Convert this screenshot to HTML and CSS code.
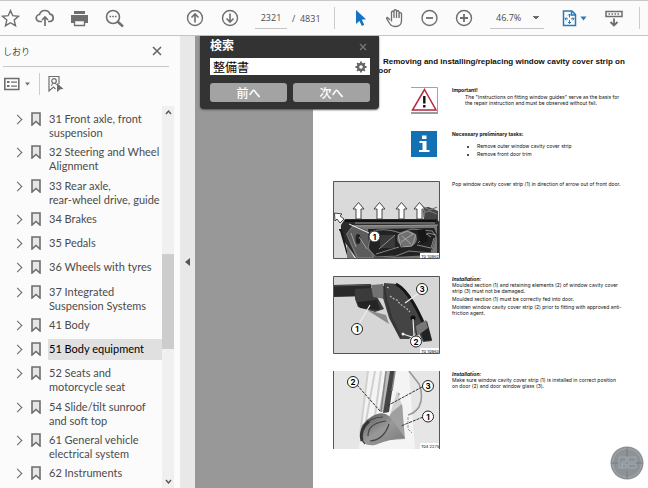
FILE: index.html
```
<!DOCTYPE html>
<html lang="en">

<head>
    <meta charset="UTF-8">
    <meta name="viewport" content="width=device-width, initial-scale=1.0">
    <title>Workshop Manual</title>
    <link rel="stylesheet" href="styles.css">
</head>

<body>

    <header class="toolbar">
        <button class="tool" type="button" aria-label="Favourite">
            <svg viewBox="0 0 20 20"><path d="M10.5 2.5l2.3 5.2 5.7.6-4.300 3.800 1.300 5.600-5-3-5 3 1.300-5.600-4.300-3.800 5.700-.6z" fill="none" stroke="#6e6e6e" stroke-width="1.400"/></svg>
        </button>
        <button class="tool" type="button" aria-label="Upload">
            <svg viewBox="0 0 20 20"><path d="M7 13.500H5a3.500 3.500 0 0 1-.5-7 5.500 5.500 0 0 1 10.500-.3 3.700 3.700 0 0 1 .2 7.300H13M10 18V9M7 12l3-3 3 3" fill="none" stroke="#6e6e6e" stroke-width="1.700"/></svg>
        </button>
        <button class="tool" type="button" aria-label="Print">
            <svg viewBox="0 0 20 20"><path d="M4 3h11v3H4zM1 7h17v8h-3v-3H4v3H1z" fill="#6e6e6e"/><path d="M4.500 12.500h10v5h-10z" fill="#fbfbfb" stroke="#6e6e6e" stroke-width="1.300"/></svg>
        </button>
        <button class="tool" type="button" aria-label="Find">
            <svg viewBox="0 0 20 20"><circle cx="8" cy="9" r="6.500" fill="none" stroke="#6e6e6e" stroke-width="1.600"/><path d="M12.500 13.500l5.500 5" stroke="#6e6e6e" stroke-width="2.400"/><path d="M4.500 8.500h1.600M7.200 8.500h1.600M9.900 8.500h1.600" stroke="#6e6e6e" stroke-width="1.500"/></svg>
        </button>

        <button class="tool page-nav" type="button" aria-label="Previous page">
            <svg viewBox="0 0 20 20"><circle cx="10" cy="10" r="7.500" fill="none" stroke="#6e6e6e" stroke-width="1.400"/><path d="M10 14.500V6M6.500 9.500L10 6l3.500 3.500" fill="none" stroke="#6e6e6e" stroke-width="1.600"/></svg>
        </button>
        <button class="tool" type="button" aria-label="Next page">
            <svg viewBox="0 0 20 20"><circle cx="10" cy="10" r="7.500" fill="none" stroke="#6e6e6e" stroke-width="1.400"/><path d="M10 5.500V14M6.500 10.500L10 14l3.500-3.500" fill="none" stroke="#6e6e6e" stroke-width="1.600"/></svg>
        </button>
        <div class="page-count">
            <input class="page-input" type="text" value="2321" aria-label="Page number">
            <span>/&nbsp; 4831</span>
        </div>
        <span class="divider"></span>

        <button class="tool" type="button" aria-label="Select tool">
            <svg viewBox="0 0 20 20"><path d="M6 2l10 9.300-4.200.5 2.500 5-2.400 1.200-2.500-5L6 16z" fill="#1473c4"/></svg>
        </button>
        <button class="tool" type="button" aria-label="Hand tool">
            <svg viewBox="0 0 20 20"><path d="M5 12L2.500 9.500Q1.300 9.800 1.800 11L5 16q1.500 2.500 5.500 2.500 6 0 6-6V5.500q-1.200-1.600-2.400 0V10M14 10V3.500q-1.200-1.500-2.500 0V10M11.500 10V2.500q-1.300-1.500-2.500 0V10M9 10V4q-1.300-1.500-2.500 0v9.500" fill="none" stroke="#6e6e6e" stroke-width="1.300"/></svg>
        </button>
        <button class="tool" type="button" aria-label="Zoom out">
            <svg viewBox="0 0 20 20"><circle cx="9.500" cy="10" r="7.500" fill="none" stroke="#6e6e6e" stroke-width="1.400"/><path d="M6 10h7" stroke="#6e6e6e" stroke-width="1.800"/></svg>
        </button>
        <button class="tool" type="button" aria-label="Zoom in">
            <svg viewBox="0 0 20 20"><circle cx="9" cy="10" r="7.500" fill="none" stroke="#6e6e6e" stroke-width="1.400"/><path d="M5 10h8M9 6v8" stroke="#6e6e6e" stroke-width="1.800"/></svg>
        </button>
        <select class="zoom-select" aria-label="Zoom level">
            <option>46.7%</option>
        </select>
        <button class="tool tool-wide" type="button" aria-label="Fit page">
            <svg viewBox="0 0 30 20"><path d="M4.500 3h8.500l3.500 3.500v11h-12zM12.500 3v4h4" fill="none" stroke="#2a78b5" stroke-width="1.500"/><path d="M10.500 6v3.500M9 7.500L10.500 6 12 7.500M10.500 12v3.500M9 14l1.500 1.500L12 14M6 10.800h3M7.300 9.300L6 10.800l1.300 1.500M12 10.800h3M13.700 9.300l1.300 1.500-1.300 1.500" fill="none" stroke="#2a78b5"/><path d="M21.500 8.500h6l-3 4z" fill="#2a78b5"/></svg>
        </button>
        <button class="tool" type="button" aria-label="Read mode">
            <svg viewBox="0 0 20 20"><path d="M2 3.500h16v5H2z" fill="none" stroke="#6e6e6e" stroke-width="1.500"/><path d="M4.500 6h11" stroke="#6e6e6e" stroke-width="1.500" stroke-dasharray="1.500 1.500"/><path d="M10 10.500v7M6.500 14l3.500 3.500 3.500-3.500" fill="none" stroke="#6e6e6e" stroke-width="1.800"/></svg>
        </button>
        <span class="divider"></span>
    </header>

    <main class="workspace">
        <aside class="sidebar">
            <div class="sidebar-header">
                <h2>しおり</h2>
                <button class="close-panel" type="button" aria-label="Close">
                    <svg viewBox="0 0 10 10"><path d="M1 1l8 8M9 1L1 9" stroke="#666" stroke-width="1.600"/></svg>
                </button>
            </div>
            <div class="sidebar-tools">
                <button type="button" aria-label="Options">
                    <svg width="28" height="16" viewBox="0 0 28 16"><path d="M1.800 2.500h14v11h-14z" fill="none" stroke="#6e6e6e" stroke-width="1.600"/><path d="M4 5h2.500v2H4zM4 9h2.500v2H4zM8 5.500h6v1.300H8zM8 9.500h6v1.300H8zM22 6.500h5l-2.500 3z" fill="#6e6e6e"/></svg>
                </button>
                <span class="divider"></span>
                <button type="button" aria-label="Find current bookmark">
                    <svg width="16" height="18" viewBox="0 0 16 18"><path d="M11 9V1.500H1V16l4.500-4 2 2" fill="none" stroke="#6e6e6e" stroke-width="1.200"/><circle cx="6" cy="6" r="2.300" fill="none" stroke="#6e6e6e" stroke-width="1.200"/><path d="M4.500 8L3.500 11M7.500 8l1 2" stroke="#6e6e6e"/><path d="M9 8l6.500 6-3.200.3L9 17z" fill="#6e6e6e"/></svg>
                </button>
            </div>

            <svg class="sprite">
                <symbol id="bookmark" viewBox="0 0 10 14">
                    <path d="M1 1h8v12L5 9.500 1 13z" fill="#e6e6e6" stroke="#6e6e6e" stroke-width="1.600"/>
                </symbol>
            </svg>

            <div class="bookmark-area">
                <ul class="bookmarks">
                    <li><svg class="mark"><use href="#bookmark"/></svg><a href="#">31 Front axle, front<br>suspension</a></li>
                    <li><svg class="mark"><use href="#bookmark"/></svg><a href="#">32 Steering and Wheel<br>Alignment</a></li>
                    <li><svg class="mark"><use href="#bookmark"/></svg><a href="#">33 Rear axle,<br>rear-wheel drive, guide</a></li>
                    <li><svg class="mark"><use href="#bookmark"/></svg><a href="#">34 Brakes</a></li>
                    <li><svg class="mark"><use href="#bookmark"/></svg><a href="#">35 Pedals</a></li>
                    <li><svg class="mark"><use href="#bookmark"/></svg><a href="#">36 Wheels with tyres</a></li>
                    <li><svg class="mark"><use href="#bookmark"/></svg><a href="#">37 Integrated<br>Suspension Systems</a></li>
                    <li><svg class="mark"><use href="#bookmark"/></svg><a href="#">41 Body</a></li>
                    <li><svg class="mark"><use href="#bookmark"/></svg><a class="selected" href="#">51 Body equipment</a></li>
                    <li><svg class="mark"><use href="#bookmark"/></svg><a href="#">52 Seats and<br>motorcycle seat</a></li>
                    <li><svg class="mark"><use href="#bookmark"/></svg><a href="#">54 Slide/tilt sunroof<br>and soft top</a></li>
                    <li><svg class="mark"><use href="#bookmark"/></svg><a href="#">61 General vehicle<br>electrical system</a></li>
                    <li><svg class="mark"><use href="#bookmark"/></svg><a href="#">62 Instruments</a></li>
                </ul>
                <div class="scrollbar">
                    <svg viewBox="0 0 12 12"><path d="M4 8l2.500-3L9 8" fill="none" stroke="#555" stroke-width="1.400"/></svg>
                    <div class="track">
                        <div class="thumb"></div>
                    </div>
                    <svg viewBox="0 0 12 12"><path d="M4 4l2.500 3L9 4" fill="none" stroke="#555" stroke-width="1.400"/></svg>
                </div>
            </div>
        </aside>

        <button class="splitter" type="button" aria-label="Collapse panel">
            <svg width="5" height="8" viewBox="0 0 5 8"><path d="M5 0v8L0 4z" fill="#555"/></svg>
        </button>

        <section class="viewer">
            <article class="page">
                <h1>Removing and installing/replacing window cavity cover strip on<br>front door</h1>

                <div class="row">
                    <svg class="notice" viewBox="0 0 27 27"><path d="M0 .5h26.500V25" fill="none" stroke="#9aa8a4"/><path d="M0 26h27" stroke="#8f9f9b" stroke-width="2"/><path d="M13.500 2.500L25 23H1.500z" fill="#fff" stroke="#b5273f" stroke-width="1.500"/><path d="M13.300 9v7.500M13.300 18V20.500" stroke="#111" stroke-width="2.400"/></svg>
                    <div class="text">
                        <h3>Important!</h3>
                        <p class="indent">The "Instructions on fitting window guides" serve as the basis for<br>the repair instruction and must be observed without fail.</p>
                    </div>
                </div>

                <div class="row">
                    <svg class="notice" viewBox="0 0 27 27"><path d="M0 0h26v26H0z" fill="#1470b5"/><path d="M11 4.500h4.500V8H11zM8.500 10h7v9h3v2H8v-2h3.500v-7h-3z" fill="#fff"/></svg>
                    <div class="text">
                        <h3>Necessary preliminary tasks:</h3>
                        <ul>
                            <li>Remove outer window cavity cover strip</li>
                            <li>Remove front door trim</li>
                        </ul>
                    </div>
                </div>

                <div class="row first-step">
                    <svg class="figure" viewBox="0 0 107 78">
                        <path d="M0 0h107v78H0z" fill="#dadada"/>
                        <path d="M90 30q3-6 8-3l7 3v18H92z" fill="#444"/>
                        <path d="M88 25l9 4 7-3M90 32l6-2 8 3M92 27l-1 9" fill="none" stroke="#777" stroke-width="1.200"/>
                        <path d="M12 38h92l3 4v36H24L8 56V44z" fill="#2b2b2b"/>
                        <path d="M13 53l7-9h84v34H24z" fill="#777"/>
                        <path d="M14 53l7-8 13 4 5 27H25z" fill="#5c5c5c"/>
                        <path d="M35 48l66-1 3 7-6 20-56 3-6-10z" fill="#222"/>
                        <path d="M12 40h91" stroke="#111" stroke-width="2"/>
                        <path d="M22 42h80M21 45l84-1" fill="none" stroke="#999"/>
                        <path d="M38 51q12-5 29 1l12-4 20 2 4 5-5 17-22-2-13 5-20 1-8-8z" fill="none" stroke="#7c7c7c" stroke-width="1.100"/>
                        <path d="M47 54h15v13H47z" fill="#3a3a3a"/>
                        <ellipse cx="74" cy="58" rx="10" ry="8" fill="#707070"/>
                        <path d="M65 54l9-4 9 4-4 11-11 1zM68 61l12-8M69 55l9 8M85 62l10-10 8 2M84 64l14 3 3-10M43 73l23-7M46 68l16-14M88 49l10 7" fill="none" stroke="#c9c9c9" stroke-width=".6"/>
                        <path d="M84 49l8-1 3 12-7 3z" fill="#171717"/>
                        <ellipse cx="25" cy="58" rx="2.500" ry="5" fill="#222"/>
                        <path d="M26 56l8 12M18 52l5 14" stroke="#bbb" stroke-width=".7"/>
                        <path d="M16 43l20 9" stroke="#eee"/>
                        <path d="M9 48l7 30H12L6 48z" fill="#181818"/>
                        <path d="M0 50h7l8 28H0z" fill="#dadada"/>
                        <path d="M14 64l8 14h-8z" fill="#777"/>
                        <g fill="#fff" stroke="#333" stroke-width=".9">
                            <path id="arrow" d="M25.500 21.500l5.500 6.500h-3v10h-5V28h-3z"/>
                            <use href="#arrow" x="21"/>
                            <use href="#arrow" x="43"/>
                            <use href="#arrow" x="61"/>
                            <path d="M1.500 32l7.500 1-2 2 4 3-4 4-3-4-2 2z"/>
                        </g>
                        <circle cx="41.500" cy="55.500" r="5.500" fill="#fff" stroke="#222"/>
                        <text x="41.500" y="58.500" class="callout">1</text>
                        <path d="M87 72h20v6H87z" fill="#fff"/>
                        <text x="97" y="77" class="code">T0 10962</text>
                        <path d="M.5.5h106v77H.5z" fill="none" stroke="#555"/>
                    </svg>
                    <div class="text">
                        <p>Pop window cavity cover strip (1) in direction of arrow out of front door.</p>
                    </div>
                </div>

                <div class="row">
                    <svg class="figure" viewBox="0 0 107 78">
                        <path d="M0 0h107v78H0z" fill="#d6d6d6"/>
                        <path d="M0 9l38-1v12L0 21z" fill="#292929"/>
                        <path d="M0 10l38-1" stroke="#555"/>
                        <path d="M22 13l17-1 12 21-9 3-17-5-3-8z" fill="#3b3b3b"/>
                        <path d="M24 26l20-2 3 10-20-2z" fill="#242424"/>
                        <path d="M34 34l19 5 3 9z" fill="#8a8a8a"/>
                        <path d="M38 9l12-1 2 15-12-2z" fill="#727272"/>
                        <path d="M51 7l14 1q16 10 34 57l-9 1-5-11-9 8h-9L56 42 50 22z" fill="#444"/>
                        <path d="M63 8q17 9 34 56" fill="none" stroke="#171717" stroke-width="3"/>
                        <path d="M51 10l2 14 6 20 9 17" fill="none" stroke="#333" stroke-width="2"/>
                        <path d="M54 11l3 2M57 20l4 3 3 1 3 4 6 4 4 4" fill="none" stroke="#bbb" stroke-width="1.200" stroke-dasharray="2 1.500"/>
                        <path d="M84 52l10-7 5 19-8 1-3-8-6 3z" fill="#222"/>
                        <path d="M83 50l10-6 2 8-11 8z" fill="#777"/>
                        <circle cx="80" cy="42" r="2.500" fill="#111"/>
                        <circle cx="70" cy="58" r="1.500" fill="#eee"/>
                        <path d="M26 48l11-19M86 17L72 27M81 59l-1-16M79 61l-9-3" stroke="#eee" stroke-width="1.200"/>
                        <g fill="#fff" stroke="#222">
                            <circle cx="24" cy="53" r="5.500"/>
                            <circle cx="89" cy="13" r="5.500"/>
                            <circle cx="83" cy="65.500" r="5.500"/>
                        </g>
                        <text x="24" y="56" class="callout">1</text>
                        <text x="89" y="16" class="callout">3</text>
                        <text x="83" y="68.500" class="callout">2</text>
                        <path d="M87 72h20v6H87z" fill="#fff"/>
                        <text x="97" y="77" class="code">T0 10963</text>
                        <path d="M.5.5h106v77H.5z" fill="none" stroke="#555"/>
                    </svg>
                    <div class="text">
                        <h3><i>Installation:</i></h3>
                        <p>Moulded section (1) and retaining elements (2) of window cavity cover<br>strip (3) must not be damaged.</p>
                        <p>Moulded section (1) must be correctly fed into door.</p>
                        <p>Moisten window cavity cover strip (2) prior to fitting with approved anti-<br>friction agent.</p>
                    </div>
                </div>

                <div class="row">
                    <svg class="figure" viewBox="0 0 107 78">
                        <defs>
                            <linearGradient id="glass" x2="1" y2="1"><stop offset="0" stop-color="#555"/><stop offset=".5" stop-color="#999"/><stop offset="1" stop-color="#777"/></linearGradient>
                        </defs>
                        <path d="M0 0h107v78H0z" fill="#e6e6e6"/>
                        <path d="M34 0h42l6 78H26l4-40z" fill="#f4f4f4"/>
                        <path d="M35 0l-8 64M42 0l-9 50M48 0l-6 45" stroke="#d0d0d0" stroke-width="2"/>
                        <path d="M53 0h9l-8 42-8-2z" fill="#bbb"/>
                        <path d="M57 0h5l-6 41-6 1z" fill="#444"/>
                        <path d="M53 0l-5 41M62 0l-3 20" stroke="#888" stroke-width="1.500"/>
                        <path d="M76 0l10 13q5 12 0 23-4 6-11 8M66 22l-4 18" fill="none" stroke="#999" stroke-width="1.600"/>
                        <path d="M64 20l6 17-2 22-12-12z" fill="#d2d2d2"/>
                        <path d="M59 41l10-8 3 35-30 2z" fill="#a0a0a0"/>
                        <path d="M27 64q0-12 11-18 11-7 18-1 8 10 16 22-16 1-30 7-13 2-15-10z" fill="url(#glass)"/>
                        <path d="M32 73q-7-6-2-17 7-10 20-10M37 70q14-1 19-17M35 65q0-13 18-15" fill="none" stroke="#444" stroke-width="1.200"/>
                        <path d="M29 70q-3-11 7-20" fill="none" stroke="#333" stroke-width="3"/>
                        <path d="M24 14l23 26M89 16L54 35M90 46l-22 9" stroke="#333" stroke-dasharray="3 1"/>
                        <path d="M75 46v12l4 4" fill="none" stroke="#999" stroke-dasharray="3 1"/>
                        <g fill="#fff" stroke="#222">
                            <circle cx="20" cy="11" r="5.500"/>
                            <circle cx="95" cy="15" r="5.500"/>
                            <circle cx="95" cy="45.500" r="5.500"/>
                        </g>
                        <text x="20" y="14" class="callout">2</text>
                        <text x="95" y="18" class="callout">3</text>
                        <text x="95" y="48.500" class="callout">1</text>
                        <path d="M87 72h20v6H87z" fill="#fff"/>
                        <text x="97" y="77" class="code">T04 2275</text>
                        <path d="M.5 0v78M106.500 0v78" stroke="#555"/>
                    </svg>
                    <div class="text">
                        <h3><i>Installation:</i></h3>
                        <p>Make sure window cavity cover strip (1) is installed in correct position<br>on door (2) and door window glass (3).</p>
                    </div>
                </div>
            </article>

            <form class="search-box">
                <div class="search-title">
                    <label for="search">検索</label>
                    <button type="button" aria-label="Close search">
                        <svg width="8" height="8" viewBox="0 0 8 8"><path d="M1 1l6 6M7 1L1 7" stroke="#777" stroke-width="1.300"/></svg>
                    </button>
                </div>
                <div class="search-field">
                    <input id="search" type="text" value="整備書">
                    <svg width="12" height="12" viewBox="0 0 12 12"><circle cx="6" cy="6" r="3" fill="none" stroke="#666" stroke-width="2.400"/><path d="M6 .5v2M6 9.500v2M.5 6h2M9.500 6h2M2.100 2.100l1.400 1.400M8.500 8.500l1.400 1.400M2.100 9.900l1.400-1.400M8.500 3.500l1.400-1.400" stroke="#666" stroke-width="1.800"/></svg>
                </div>
                <div class="search-buttons">
                    <button type="button">前へ</button>
                    <button type="button">次へ</button>
                </div>
            </form>

            <button class="float-button" type="button" aria-label="Capture">
                <svg viewBox="0 0 34 34"><circle cx="17" cy="17" r="16.500" fill="#8d9296"/><circle cx="17" cy="17" r="14.500" fill="none" stroke="#a4a9ac"/><path d="M17 1v9M17 25v8M1 17h7M26 17h7" stroke="#777d82"/><path d="M9 11h7v5h-4v6H9zM18 11h8v5h-8zM18 18h8v4h-8zM12 18h4v4h-4z" fill="none" stroke="#9fabb3"/></svg>
            </button>
        </section>
    </main>

</body>

</html>
```
FILE: styles.css
```
* {
    box-sizing: border-box;
}

body {
    display: flex;
    flex-direction: column;
    height: 100vh;
    margin: 0;
    overflow: hidden;
    background-color: #fbfbfb;
    font-family: "Open Sans", "Noto Sans CJK JP", sans-serif;
    font-size: 11px;
    color: #4b4b4b;
}

h1, h2, h3, p, ul {
    margin: 0;
    padding: 0;
}

button {
    padding: 0;
    border: 0;
    background: none;
}

svg {
    display: block;
}

/* Toolbar */
.toolbar {
    display: flex;
    flex: none;
    align-items: center;
    gap: 15px;
    height: 36px;
    border-top: 1px solid #c8c8c8;
    border-bottom: 1px solid #c4c4c4;
}

.tool {
    flex: none;
    width: 20px;
    height: 20px;
}

.tool-wide {
    width: 30px;
}

.page-nav {
    margin-left: 45px;
}

.page-count {
    display: flex;
    flex: none;
    align-items: center;
    gap: 5px;
    width: 64px;
    font-size: 9px;
    white-space: nowrap;
}

.page-input {
    width: 32px;
    height: 22px;
    padding: 0;
    border: 0;
    border-bottom: 1px solid #c4c4c4;
    background: none;
    font: inherit;
    color: inherit;
    text-align: center;
}

.divider {
    flex: none;
    width: 1px;
    height: 22px;
    background-color: #ccc;
}

.zoom-select {
    flex: none;
    width: 54px;
    height: 22px;
    padding: 0 0 0 6px;
    appearance: none;
    border: 0;
    border-bottom: 1px solid #c4c4c4;
    border-radius: 0;
    background: linear-gradient(to top right, transparent 50%, #6e6e6e 50%) 43px 9px / 3px 4px no-repeat,
        linear-gradient(to top left, transparent 50%, #6e6e6e 50%) 46px 9px / 3px 4px no-repeat;
    font: inherit;
    font-size: 9px;
    color: inherit;
}

/* Bookmarks panel */
.workspace {
    display: flex;
    flex: 1;
    min-height: 0;
}

.sidebar {
    display: flex;
    flex: none;
    flex-direction: column;
    width: 180px;
}

.sidebar-header {
    display: flex;
    align-items: center;
    justify-content: space-between;
    height: 31px;
    margin: 0 11px 0 3px;
    padding-right: 7px;
    border-bottom: 1px solid #c8c8c8;
}

.sidebar-header h2 {
    font-size: 9px;
    font-weight: normal;
}

.close-panel {
    width: 10px;
    height: 10px;
}

.sidebar-tools {
    display: flex;
    align-items: center;
    gap: 8px;
    height: 33px;
    margin-bottom: 6px;
    padding-left: 3px;
}

.sprite {
    display: none;
}

.bookmark-area {
    display: flex;
    flex: 1;
    min-height: 0;
}

.bookmarks {
    display: flex;
    flex: 1;
    flex-direction: column;
    justify-content: space-between;
    min-width: 0;
    padding: 3px 0 1px 14px;
    font-family: Lato, "Open Sans", sans-serif;
    list-style: none;
}

.bookmarks li {
    display: flex;
    align-items: flex-start;
    min-height: 24px;
}

/* chevron */
.bookmarks li::before {
    content: "";
    flex: none;
    width: 6px;
    height: 6px;
    margin: 7px 10px 0 0;
    border: solid #666;
    border-width: 1px 1px 0 0;
    transform: rotate(45deg);
}

.mark {
    flex: none;
    width: 10px;
    height: 14px;
    margin: 3px 7px 0 0;
}

.bookmarks a {
    flex: 1;
    padding: 3px 0 2px 1px;
    line-height: 14px;
    color: inherit;
    text-decoration: none;
    white-space: nowrap;
}

.bookmarks .selected {
    padding-bottom: 4px;
    background-color: #e0e0e0;
    color: #000;
}

.scrollbar {
    display: flex;
    flex: none;
    flex-direction: column;
    width: 12px;
    margin-right: 6px;
    background-color: #f0f0f0;
}

.scrollbar svg {
    height: 12px;
}

.track {
    display: flex;
    flex: 1;
    flex-direction: column;
    justify-content: center;
    padding-top: 9px;
}

.thumb {
    height: 27%;
    background-color: #cdcdcd;
}

.splitter {
    display: flex;
    flex: none;
    align-items: center;
    justify-content: center;
    width: 15px;
    background-color: #e8e8e8;
}

/* Document */
.viewer {
    position: relative;
    flex: 1;
    min-width: 0;
    padding-left: 118px;
    background-color: #989898;
}

.page {
    display: flex;
    flex-direction: column;
    gap: 17px;
    height: 100%;
    padding: 21px 20px 0;
    background-color: #fff;
    font-family: Inter, "Liberation Sans", sans-serif;
    font-size: 5px;
    line-height: 6px;
    color: #111;
}

.page h1 {
    margin-bottom: -5px;
    padding-left: 20px;
    font-family: "Liberation Sans", Arial, sans-serif;
    font-size: 8px;
    line-height: 9px;
    text-indent: 30px;
    white-space: nowrap;
}

.row {
    display: grid;
    grid-template-columns: 107px 1fr;
    gap: 12px;
}

.first-step {
    margin-top: 6px;
}

.notice {
    justify-self: end;
    width: 29px;
    height: 27px;
    padding-right: 2px;
}

.figure {
    width: 107px;
    height: 78px;
}

.callout {
    font-size: 8px;
    font-weight: bold;
    text-anchor: middle;
}

.code {
    font-size: 4px;
    text-anchor: middle;
}

.text h3 {
    font-size: 5px;
}

.text p {
    margin-bottom: 2px;
    white-space: nowrap;
}

.text .indent {
    margin-top: 1px;
    padding-left: 13px;
}

.text ul {
    margin-top: 5px;
    padding-left: 25px;
    line-height: 8px;
}

/* Search popup */
.search-box {
    position: absolute;
    top: 0;
    left: 5px;
    width: 179px;
    padding: 0 9px 7px 10px;
    border-radius: 0 0 4px 4px;
    background-color: #333;
    box-shadow: 0 1px 2px #555;
    font-family: "Noto Sans CJK JP", sans-serif;
}

.search-title {
    display: flex;
    align-items: center;
    justify-content: space-between;
    height: 22px;
    padding-right: 3px;
    font-size: 12px;
    font-weight: bold;
    line-height: 18px;
    color: #fff;
}

.search-title label {
    margin-bottom: 4px;
}

.search-field {
    display: flex;
    align-items: center;
    height: 17px;
    padding: 0 3px;
    background-color: #fff;
}

.search-field input {
    flex: 1;
    min-width: 0;
    height: 17px;
    padding: 0;
    border: 0;
    background: none;
    font: inherit;
    font-size: 12px;
    color: #000;
}

.search-buttons {
    display: flex;
    gap: 6px;
    margin-top: 8px;
}

.search-buttons button {
    flex: 1;
    height: 19px;
    border-radius: 3px;
    background-color: #a3a3a3;
    font: inherit;
    font-size: 12px;
    font-weight: 500;
    line-height: 16px;
    color: #fff;
}

.float-button {
    position: absolute;
    right: 4px;
    bottom: 8px;
    width: 34px;
    height: 34px;
}
```
